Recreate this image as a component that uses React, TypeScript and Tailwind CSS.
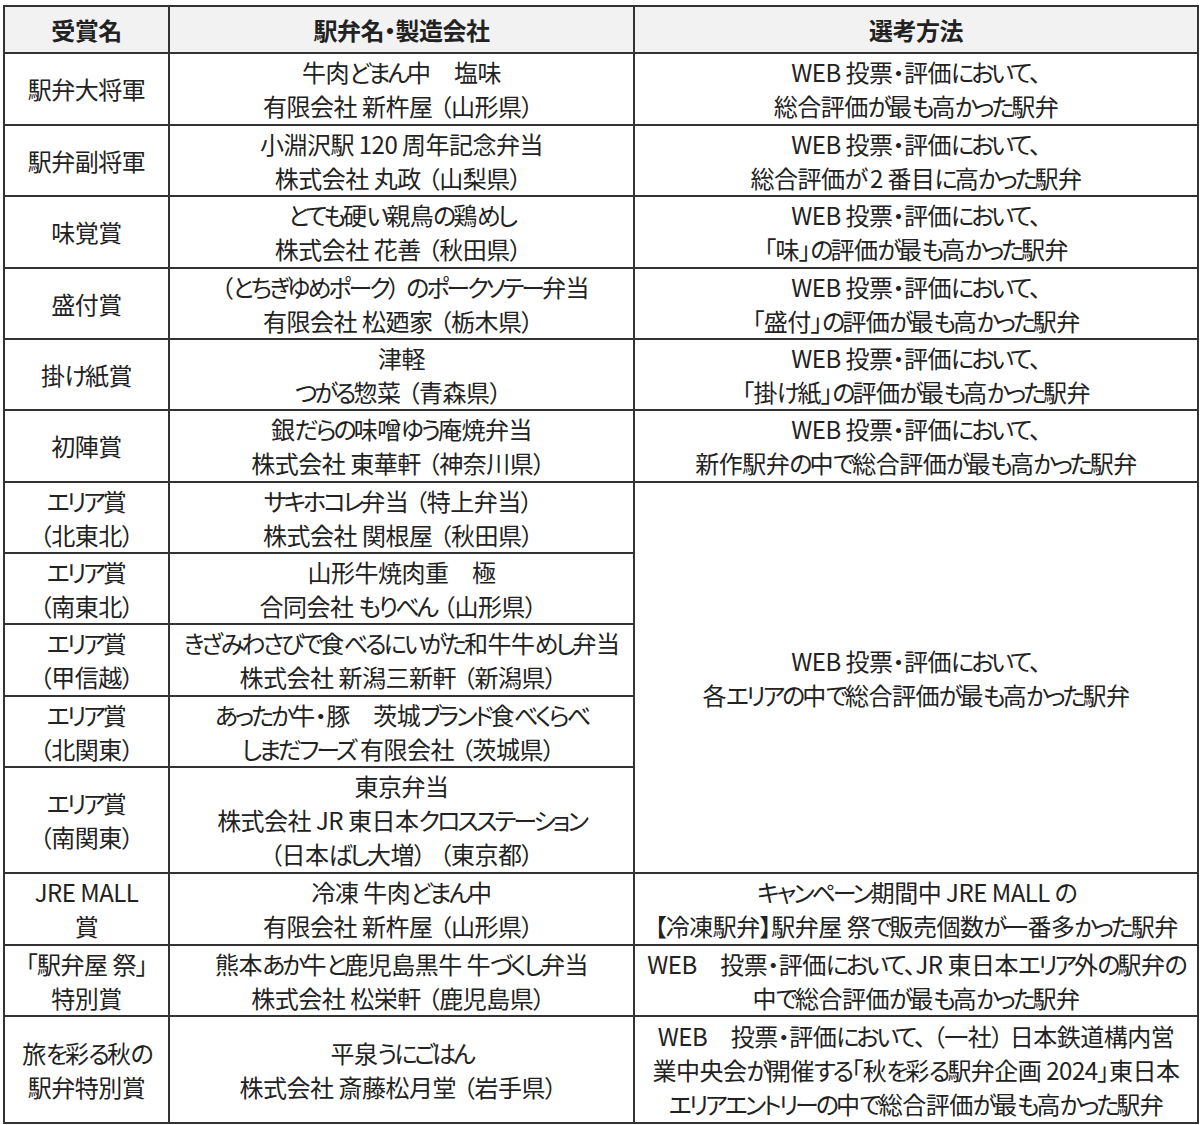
const font = {
  fontFamily: '"Noto Sans CJK JP", "Noto Sans", sans-serif',
}

type Row = {
  award: string[]
  bento: string[]
  method?: string[]
  methodSpan?: number
  h: string
}

const rows: Row[] = [
  {
    award: ["駅弁大将軍"],
    bento: ["牛肉どまん中　塩味", "有限会社 新杵屋（山形県）"],
    method: ["WEB 投票・評価において、", "総合評価が最も高かった駅弁"],
    h: "h-[72px]",
  },
  {
    award: ["駅弁副将軍"],
    bento: ["小淵沢駅 120 周年記念弁当", "株式会社 丸政（山梨県）"],
    method: ["WEB 投票・評価において、", "総合評価が 2 番目に高かった駅弁"],
    h: "h-[71px]",
  },
  {
    award: ["味覚賞"],
    bento: ["とても硬い親鳥の鶏めし", "株式会社 花善（秋田県）"],
    method: ["WEB 投票・評価において、", "「味」の評価が最も高かった駅弁"],
    h: "h-[72px]",
  },
  {
    award: ["盛付賞"],
    bento: ["（とちぎゆめポーク）のポークソテー弁当", "有限会社 松廼家（栃木県）"],
    method: ["WEB 投票・評価において、", "「盛付」の評価が最も高かった駅弁"],
    h: "h-[71px]",
  },
  {
    award: ["掛け紙賞"],
    bento: ["津軽", "つがる惣菜（青森県）"],
    method: ["WEB 投票・評価において、", "「掛け紙」の評価が最も高かった駅弁"],
    h: "h-[71px]",
  },
  {
    award: ["初陣賞"],
    bento: ["銀だらの味噌ゆう庵焼弁当", "株式会社 東華軒（神奈川県）"],
    method: ["WEB 投票・評価において、", "新作駅弁の中で総合評価が最も高かった駅弁"],
    h: "h-[72px]",
  },
  {
    award: ["エリア賞", "（北東北）"],
    bento: ["サキホコレ弁当（特上弁当）", "株式会社 関根屋（秋田県）"],
    method: ["WEB 投票・評価において、", "各エリアの中で総合評価が最も高かった駅弁"],
    methodSpan: 5,
    h: "h-[71px]",
  },
  {
    award: ["エリア賞", "（南東北）"],
    bento: ["山形牛焼肉重　極", "合同会社 もりべん（山形県）"],
    h: "h-[71px]",
  },
  {
    award: ["エリア賞", "（甲信越）"],
    bento: ["きざみわさびで食べるにいがた和牛牛めし弁当", "株式会社 新潟三新軒（新潟県）"],
    h: "h-[72px]",
  },
  {
    award: ["エリア賞", "（北関東）"],
    bento: ["あったか牛・豚　茨城ブランド食べくらべ", "しまだフーズ 有限会社（茨城県）"],
    h: "h-[71px]",
  },
  {
    award: ["エリア賞", "（南関東）"],
    bento: ["東京弁当", "株式会社 JR 東日本クロスステーション", "（日本ばし大増）（東京都）"],
    h: "h-[106px]",
  },
  {
    award: ["JRE MALL", "賞"],
    bento: ["冷凍 牛肉どまん中", "有限会社 新杵屋（山形県）"],
    method: ["キャンペーン期間中 JRE MALL の", "【冷凍駅弁】駅弁屋 祭で販売個数が一番多かった駅弁"],
    h: "h-[72px]",
  },
  {
    award: ["「駅弁屋 祭」", "特別賞"],
    bento: ["熊本あか牛と鹿児島黒牛 牛づくし弁当", "株式会社 松栄軒（鹿児島県）"],
    method: ["WEB　投票・評価において、JR 東日本エリア外の駅弁の", "中で総合評価が最も高かった駅弁"],
    h: "h-[71px]",
  },
  {
    award: ["旅を彩る秋の", "駅弁特別賞"],
    bento: ["平泉うにごはん", "株式会社 斎藤松月堂（岩手県）"],
    method: [
      "WEB　投票・評価において、（一社）日本鉄道構内営",
      "業中央会が開催する「秋を彩る駅弁企画 2024」東日本",
      "エリアエントリーの中で総合評価が最も高かった駅弁",
    ],
    h: "h-[107px]",
  },
]

// the original font has narrow kana and wide parens, so adjust those runs
function Text({ s }: { s: string }) {
  const parts = s.split(/([\u3041-\u309f\u30a0-\u30fa\u30fc]+|（|）)/)
  return (
    <>
      {parts.map((p, i) => {
        if (!p) return null
        if (p === "（") return <span key={i} className="ml-[7px]">{p}</span>
        if (p === "）") return <span key={i} className="mr-[7px]">{p}</span>
        if (i % 2 === 1) return <span key={i} className="tracking-[-3px]">{p}</span>
        return <span key={i}>{p}</span>
      })}
    </>
  )
}

function Lines({ lines }: { lines: string[] }) {
  return (
    <>
      {lines.map((l, i) => (
        <div key={i} className="whitespace-nowrap leading-[34px]">
          <Text s={l} />
        </div>
      ))}
    </>
  )
}

export default function App() {
  const cell = "border-2 border-[#333] text-center align-middle p-0 overflow-hidden"
  return (
    <div className="w-[1200px] h-[1125px] bg-white pt-[5px] pl-[3px]" style={font}>
      <table className="border-collapse table-fixed w-[1194px] text-[24px] text-[#222] tracking-[-0.5px] [font-feature-settings:'palt']">
        <colgroup>
          <col className="w-[165px]" />
          <col className="w-[465px]" />
          <col className="w-[564px]" />
        </colgroup>
        <thead>
          <tr className="h-[47px] bg-[#f2f2f2]">
            <th className={`${cell} font-bold`}>
              <Lines lines={["受賞名"]} />
            </th>
            <th className={`${cell} font-bold`}>
              <Lines lines={["駅弁名・製造会社"]} />
            </th>
            <th className={`${cell} font-bold`}>
              <Lines lines={["選考方法"]} />
            </th>
          </tr>
        </thead>
        <tbody>
          {rows.map((r, i) => {
            const isArea = i > 6 && i < 11
            return (
              <tr key={i} className={r.h}>
                <td className={cell}>
                  <Lines lines={r.award} />
                </td>
                <td className={cell}>
                  <Lines lines={r.bento} />
                </td>
                {!isArea && r.method && (
                  <td className={cell} rowSpan={r.methodSpan ?? 1}>
                    <Lines lines={r.method} />
                  </td>
                )}
              </tr>
            )
          })}
        </tbody>
      </table>
    </div>
  )
}
